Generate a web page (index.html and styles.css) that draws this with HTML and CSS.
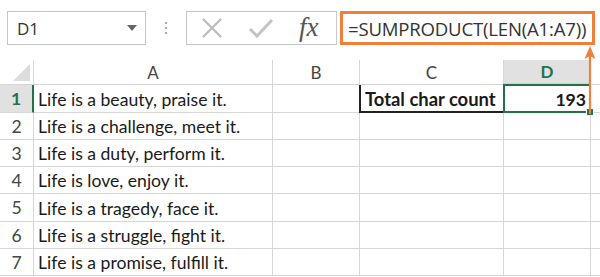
FILE: index.html
```html
<!DOCTYPE html>
<html lang="en">
<head>
  <meta charset="UTF-8" />
  <title>Total char count</title>
  <link rel="stylesheet" href="styles.css">
</head>
<body>
  <div class="sheet">
    <div class="formula-bar">
      <div class="name-box">
        <span>D1</span>
        <span class="drop"></span>
      </div>
      <div class="grip"><i></i><i></i><i></i></div>
      <div class="fx-buttons">
        <svg class="btn-icon" width="24" height="24" viewBox="0 0 24 24">
          <path d="M3 3 L21 21 M21 3 L3 21" stroke="#bdbdbd" stroke-width="2.4" fill="none"/>
        </svg>
        <svg class="btn-icon" width="26" height="24" viewBox="0 0 26 24">
          <path d="M2 13 L9 20 L24 4" stroke="#c4c4c4" stroke-width="3" fill="none"/>
        </svg>
        <span class="fx">fx</span>
      </div>
      <div class="formula">=SUMPRODUCT(LEN(A1:A7))</div>
    </div>

    <div class="grid">
      <div class="corner"><span class="tri"></span></div>
      <div class="col-head">A</div>
      <div class="col-head">B</div>
      <div class="col-head">C</div>
      <div class="col-head active">D</div>
      <div class="col-head last"></div>

      <div class="row-head active">1</div>
      <div class="cell">Life is a beauty, praise it.</div>
      <div class="cell"></div>
      <div class="cell label">Total char count</div>
      <div class="cell selected">193<span class="handle"></span></div>
      <div class="cell last"></div>

      <div class="row-head">2</div>
      <div class="cell">Life is a challenge, meet it.</div>
      <div class="cell"></div><div class="cell"></div><div class="cell"></div><div class="cell last"></div>

      <div class="row-head">3</div>
      <div class="cell">Life is a duty, perform it.</div>
      <div class="cell"></div><div class="cell"></div><div class="cell"></div><div class="cell last"></div>

      <div class="row-head">4</div>
      <div class="cell">Life is love, enjoy it.</div>
      <div class="cell"></div><div class="cell"></div><div class="cell"></div><div class="cell last"></div>

      <div class="row-head">5</div>
      <div class="cell">Life is a tragedy, face it.</div>
      <div class="cell"></div><div class="cell"></div><div class="cell"></div><div class="cell last"></div>

      <div class="row-head">6</div>
      <div class="cell">Life is a struggle, fight it.</div>
      <div class="cell"></div><div class="cell"></div><div class="cell"></div><div class="cell last"></div>

      <div class="row-head">7</div>
      <div class="cell">Life is a promise, fulfill it.</div>
      <div class="cell"></div><div class="cell"></div><div class="cell"></div><div class="cell last"></div>
    </div>

    <svg class="arrow" width="12" height="70" viewBox="0 0 12 70">
      <path d="M6 68 L6 10" stroke="#f08040" stroke-width="2.2" fill="none"/>
      <path d="M6 0 L11.5 13 L6 10 L0.5 13 Z" fill="#f08040"/>
    </svg>
  </div>
</body>
</html>
```

FILE: styles.css
```css
body {
  margin: 0;
  background: #fff;
  font-family: "Open Sans", "Noto Sans", sans-serif;
}

.sheet {
  position: relative;
  width: 600px;
  height: 277px;
  overflow: hidden;
}

.formula-bar {
  display: flex;
  align-items: center;
  height: 34px;
  padding: 11px 0 0 7px;
}

.name-box {
  display: flex;
  align-items: center;
  justify-content: space-between;
  box-sizing: border-box;
  width: 139px;
  height: 34px;
  border: 1px solid #c6c6c6;
  padding: 0 8px 0 9px;
  font-size: 17px;
  color: #333;
}

.drop {
  width: 0;
  height: 0;
  border-left: 5px solid transparent;
  border-right: 5px solid transparent;
  border-top: 6px solid #666;
}

.grip {
  display: flex;
  flex-direction: column;
  gap: 3px;
  width: 40px;
  align-items: center;
}

.grip i {
  width: 2px;
  height: 2px;
  background: #aaa;
}

.fx-buttons {
  display: flex;
  align-items: center;
  box-sizing: border-box;
  width: 151px;
  height: 34px;
  border: 1px solid #c6c6c6;
  padding: 0 0 0 13px;
  gap: 24px;
}

.fx {
  font-family: "Liberation Serif", "DejaVu Serif", serif;
  font-style: italic;
  font-size: 27px;
  color: #555;
  letter-spacing: 0;
  margin: -2px 0 0 1px;
}

.formula {
  box-sizing: border-box;
  width: 255px;
  height: 34px;
  margin-left: 3px;
  border: 3px solid #f07f3c;
  padding: 2px 0 0 5px;
  font-size: 18.6px;
  letter-spacing: -0.2px;
  color: #333;
  white-space: nowrap;
  overflow: hidden;
}

.grid {
  display: grid;
  grid-template-columns: 34px 239px 87px 144px 87px 9px;
  grid-template-rows: 25px 28px 27px 27px 27px 28px 27px 27px;
  margin-top: 15px;
  font-family: Lato, "Liberation Sans", sans-serif;
  font-size: 17.6px;
}

.grid > div {
  box-sizing: border-box;
  border-right: 1px solid #d6d6d6;
  border-bottom: 1px solid #d6d6d6;
}

.corner {
  position: relative;
}

.tri {
  position: absolute;
  right: 3px;
  bottom: 3px;
  width: 0;
  height: 0;
  border-left: 17px solid transparent;
  border-bottom: 17px solid #dcdcdc;
}

.col-head {
  display: flex;
  align-items: center;
  justify-content: center;
  color: #444;
  font-size: 17px;
}

.col-head.active {
  background: #e1e1e1;
  color: #217346;
  font-weight: bold;
  border-bottom: 2px solid #d0d0d0;
}

.row-head {
  display: flex;
  align-items: center;
  justify-content: center;
  color: #444;
}

.row-head.active {
  background: #e1e1e1;
  color: #217346;
  font-weight: bold;
  border-right: 2px solid #217346;
}

.cell {
  display: flex;
  align-items: center;
  padding: 1px 0 0 4px;
  color: #1a1a1a;
  white-space: nowrap;
}

.grid > .last {
  border-right: none;
}

.grid > .label {
  font-weight: bold;
  font-size: 18.4px;
  border-left: 2px solid #222;
  border-bottom: 2px solid #222;
  margin-left: -1px;
}

.grid > .selected {
  position: relative;
  justify-content: flex-end;
  padding-right: 3px;
  font-weight: bold;
  border: 2px solid #217346;
  margin: -1px 0 0 -1px;
}

.handle {
  position: absolute;
  right: -5px;
  bottom: -5px;
  width: 6px;
  height: 6px;
  background: #217346;
  border: 1px solid #fff;
}

.arrow {
  position: absolute;
  left: 584px;
  top: 46px;
}
```
